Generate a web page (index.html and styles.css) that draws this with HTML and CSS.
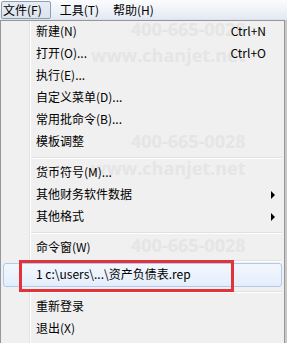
FILE: index.html
```html
<!DOCTYPE html>
<html>
<head>
<meta charset="utf-8">
<link rel="stylesheet" href="styles.css">
</head>
<body>
<div class="menubar">
  <span class="mb-item active">文件(F)</span>
  <span class="mb-item">工具(T)</span>
  <span class="mb-item">帮助(H)</span>
</div>
<div class="menu">
  <div class="wm wm1">400-665-0028</div>
  <div class="wm wm2">www.chanjet.net</div>
  <div class="wm wm3">400-665-0028</div>
  <div class="wm wm4">www.chanjet.net</div>
  <div class="wm wm5">400-665-0028</div>
  <div class="wm wm6">www.chanjet.net</div>
  <div class="item"><span>新建(N)</span><span class="key">Ctrl+N</span></div>
  <div class="item"><span>打开(O)...</span><span class="key">Ctrl+O</span></div>
  <div class="item"><span>执行(E)...</span></div>
  <div class="item"><span>自定义菜单(D)...</span></div>
  <div class="item"><span>常用批命令(B)...</span></div>
  <div class="item"><span>模板调整</span></div>
  <div class="sep"></div>
  <div class="item"><span>货币符号(M)...</span></div>
  <div class="item"><span>其他财务软件数据</span><span class="arrow"></span></div>
  <div class="item"><span>其他格式</span><span class="arrow"></span></div>
  <div class="sep"></div>
  <div class="item"><span>命令窗(W)</span></div>
  <div class="sep tight"></div>
  <div class="item hover"><span>1 c:\users\...\资产负债表.rep</span></div>
  <div class="sep"></div>
  <div class="item"><span>重新登录</span></div>
  <div class="item"><span>退出(X)</span></div>
  <div class="redbox"></div>
</div>
</body>
</html>
```
FILE: styles.css
```css
html, body {
  margin: 0;
  padding: 0;
  background: #ffffff;
  font-family: "Noto Sans CJK SC", "Noto Sans", sans-serif;
  font-size: 12px;
  color: #000;
  overflow: hidden;
}
.menubar {
  height: 20px;
  display: flex;
  align-items: center;
  padding-left: 1px;
  background: linear-gradient(to bottom, #fbfcfe 0%, #eef2f8 55%, #e1e8f2 100%);
  box-sizing: border-box;
}
.mb-item {
  height: 18px;
  line-height: 16px;
  padding: 0 5px 0 2px;
  border: 1px solid transparent;
  box-sizing: border-box;
  margin-right: 5px;
}
.mb-item.active {
  border-color: #8e9fb5;
  border-radius: 2px;
  background: linear-gradient(to bottom, #e8edf4, #dce3ed);
  padding: 0 8px 0 1px;
  margin-right: 6px;
}
.menu {
  position: relative;
  width: 285px;
  height: 323px;
  overflow: hidden;
  box-sizing: border-box;
  border: 1px solid #979797;
  border-bottom: none;
  background-color: #f0f0f0;
  background-image: linear-gradient(to right, transparent 28px, #e2e3e3 28px, #e2e3e3 29px, #ffffff 29px, #ffffff 30px, transparent 30px);
  padding: 0 2px;
  box-shadow: 2px 0 1px #c8c8c8;
}
.item {
  position: relative;
  height: 22px;
  line-height: 16px;
  display: flex;
  align-items: center;
  padding-left: 32px;
  padding-right: 12px;
  border: 1px solid transparent;
  box-sizing: border-box;
  z-index: 1;
}
.item span {
  position: relative;
  top: -1px;
}
.item .key {
  margin-left: auto;
  padding-right: 3px;
}
.item .arrow {
  margin-left: auto;
  width: 0;
  height: 0;
  top: 0;
  border-top: 4px solid transparent;
  border-bottom: 4px solid transparent;
  border-left: 4px solid #000;
  margin-right: -6px;
}
.item.hover {
  height: 24px;
  border-color: #aecbef;
  border-radius: 3px;
  background: linear-gradient(to bottom, #f2f7fd, #e4eefb);
}
.sep {
  height: 0;
  margin: 4px 0 3px 28px;
  border-top: 1px solid #e0e0e0;
  border-bottom: 1px solid #ffffff;
}
.sep.tight {
  margin: 1px 0 1px 28px;
}
.wm {
  position: absolute;
  font-family: "Open Sans", sans-serif;
  font-weight: bold;
  font-size: 18px;
  line-height: 18px;
  color: #e5e5e5;
  white-space: nowrap;
  z-index: 0;
}
.wm1 { left: 130px; top: -1px; }
.wm2 { left: 90px; top: 25px; }
.wm3 { left: 130px; top: 111px; }
.wm4 { left: 90px; top: 138px; }
.wm5 { left: 130px; top: 215px; }
.wm6 { left: 90px; top: 246px; }
.redbox {
  position: absolute;
  left: 18px;
  top: 239px;
  width: 215px;
  height: 32px;
  border: 3px solid #e2333b;
  box-sizing: border-box;
  z-index: 2;
}
```
